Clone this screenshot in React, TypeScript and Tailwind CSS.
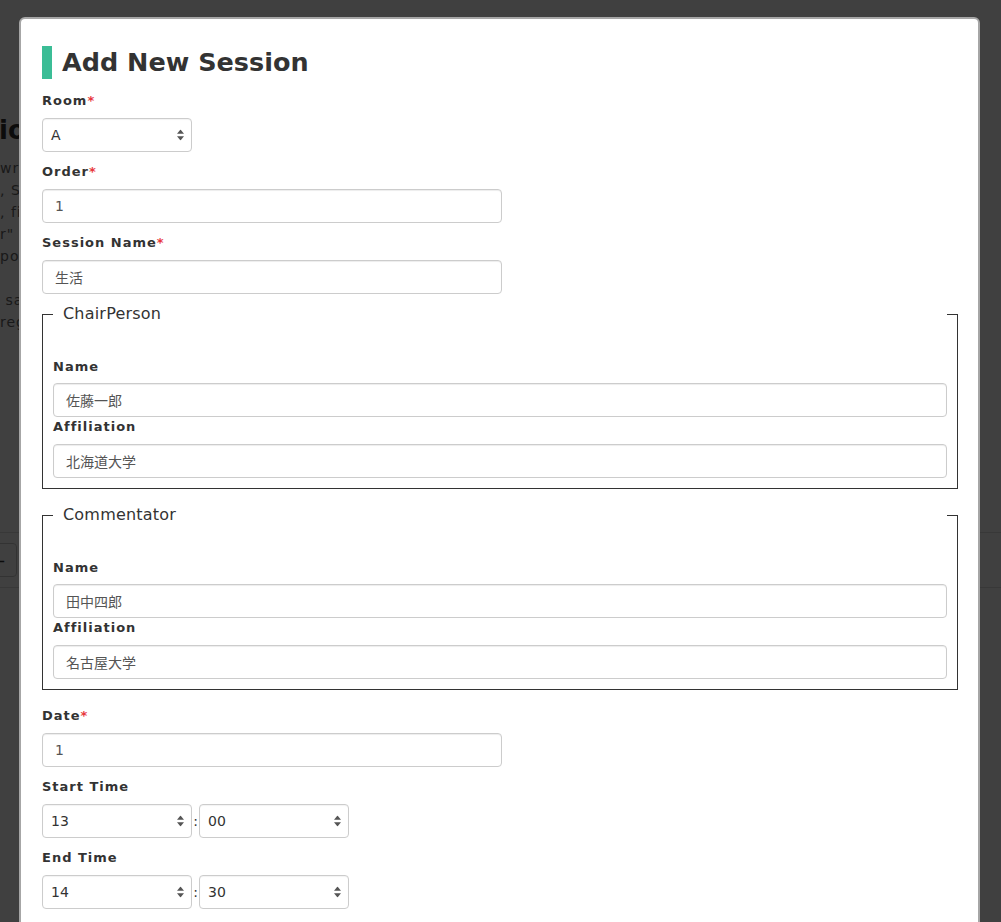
import React from "react";

const FONT = "font-['DejaVu_Sans','Noto_Sans_CJK_JP',sans-serif]";

function Label({ text, required }: { text: string; required?: boolean }) {
  return (
    <div className="text-[13px] leading-[18px] font-bold tracking-[1px] text-[#333]">
      {text}
      {required && <span className="text-[#e8383d]">*</span>}
    </div>
  );
}

function TextInput({ value, wide }: { value: string; wide?: boolean }) {
  return (
    <input
      readOnly
      value={value}
      className={`${wide ? "w-full" : "w-[460px]"} h-[34px] mt-[8px] block rounded-[4px] border border-[#ccc] bg-white px-[12px] text-[14px] leading-[20px] text-[#555] shadow-[inset_0_1px_1px_rgba(0,0,0,0.075)] outline-none ${FONT}`}
    />
  );
}

function Arrows() {
  return (
    <svg
      className="pointer-events-none absolute right-[8px] top-1/2 -translate-y-1/2"
      width="7"
      height="11"
      viewBox="0 0 7 11"
    >
      <path d="M3.5 0 L7 4.2 L0 4.2 Z" fill="#555" />
      <path d="M3.5 11 L7 6.8 L0 6.8 Z" fill="#555" />
    </svg>
  );
}

function Select({ value }: { value: string }) {
  return (
    <div className="relative w-[150px] h-[34px]">
      <div className="h-full w-full rounded-[4px] border border-[#ccc] bg-white pl-[8px] flex items-center text-[14px] text-[#333] shadow-[inset_0_1px_1px_rgba(0,0,0,0.05)]">
        {value}
      </div>
      <Arrows />
    </div>
  );
}

function Person({ title, name, aff, first }: { title: string; name: string; aff: string; first?: boolean }) {
  return (
    <fieldset className={`${first ? "mt-[9px]" : "mt-[15px]"} border border-[#333] pl-[10px] pr-[10px] pb-[10px]`}>
      <legend className="w-full pl-[10px] text-[16px] leading-[22px] text-[#333] tracking-[0.2px]">{title}</legend>
      <div className="pt-[33px]">
        <Label text="Name" />
        <input
          readOnly
          value={name}
          className={`w-full h-[34px] mt-[7px] block rounded-[4px] border border-[#ccc] bg-white px-[12px] text-[14px] text-[#555] shadow-[inset_0_1px_1px_rgba(0,0,0,0.075)] outline-none ${FONT}`}
        />
        <div className="mt-[1px]">
          <Label text="Affiliation" />
        </div>
        <TextInput value={aff} wide />
      </div>
    </fieldset>
  );
}

export default function App() {
  return (
    <div className={`relative h-[922px] w-[1001px] overflow-hidden bg-white ${FONT}`}>
      {/* background page */}
      <div className="text-[#444]">
        <div className="pt-[116px] text-[26px] leading-[28px] font-bold text-[#333] -ml-[1px]">ions</div>
        <div className="mt-[13px] text-[14px] leading-[22px] tracking-[1px] text-[#666]">
          <div>writing</div>
          <div>, Session</div>
          <div>, files</div>
          <div>r" button</div>
          <div>ponent</div>
          <div>&nbsp;</div>
          <div>&nbsp;save</div>
          <div>register</div>
        </div>
        <div className="mt-[199px] border-t border-[#ddd]" />
        <div className="py-[10px]">
          <div className="-ml-[20px] w-[37px] h-[34px] rounded-[4px] border border-[#ccc] flex items-center justify-center text-[18px] text-[#333]">
            +
          </div>
        </div>
        <div className="border-t border-[#ddd]" />
      </div>

      {/* overlay */}
      <div className="absolute inset-0 bg-black/75" />

      {/* modal */}
      <div className="absolute inset-0 pl-[19px] pt-[17px]">
        <div className="w-[961px] h-[1000px] rounded-[6px] border-2 border-[#a6a6a6] bg-white pl-[21px] pr-[20px] pt-[27px]">
          <div className="flex items-center h-[33px]">
            <div className="w-[10px] h-[33px] bg-[#3bbd96]" />
            <div className="ml-[10px] text-[25.5px] font-bold text-[#333] leading-[33px]">Add New Session</div>
          </div>

          <div className="mt-[13px]">
            <Label text="Room" required />
            <div className="mt-[8px]">
              <Select value="A" />
            </div>
          </div>

          <div className="mt-[11px]">
            <Label text="Order" required />
            <TextInput value="1" />
          </div>

          <div className="mt-[11px]">
            <Label text="Session Name" required />
            <TextInput value="生活" />
          </div>

          <Person title="ChairPerson" name="佐藤一郎" aff="北海道大学" first />
          <Person title="Commentator" name="田中四郎" aff="名古屋大学" />

          <div className="mt-[17px]">
            <Label text="Date" required />
            <TextInput value="1" />
          </div>

          <div className="mt-[11px]">
            <Label text="Start Time" />
            <div className="mt-[8px] flex items-center">
              <Select value="13" />
              <span className="w-[7px] text-center text-[14px] text-[#333]">:</span>
              <Select value="00" />
            </div>
          </div>

          <div className="mt-[11px]">
            <Label text="End Time" />
            <div className="mt-[8px] flex items-center">
              <Select value="14" />
              <span className="w-[7px] text-center text-[14px] text-[#333]">:</span>
              <Select value="30" />
            </div>
          </div>
        </div>
      </div>
    </div>
  );
}
